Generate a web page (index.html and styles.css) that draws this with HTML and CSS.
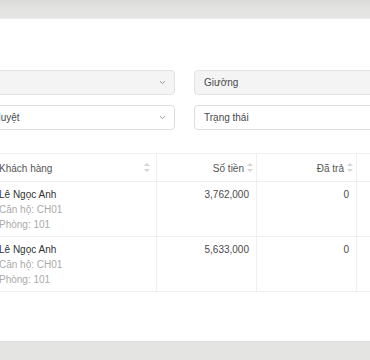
FILE: index.html
```html
<!DOCTYPE html>
<html lang="vi">
<head>
<meta charset="utf-8">
<link rel="stylesheet" href="styles.css">
</head>
<body>
<div class="topbar"></div>
<main class="card">
  <div class="filters">
    <div class="select disabled"><span class="val"></span><svg class="chev" width="7" height="5" viewBox="0 0 7 5"><path d="M1 1.2 L3.5 3.6 L6 1.2" fill="none" stroke="#9a9a9a" stroke-width="1"/></svg></div>
    <div class="select disabled"><span class="val">Giường</span></div>
    <div class="select"><span class="val">Chờ duyệt</span><svg class="chev" width="7" height="5" viewBox="0 0 7 5"><path d="M1 1.2 L3.5 3.6 L6 1.2" fill="none" stroke="#9a9a9a" stroke-width="1"/></svg></div>
    <div class="select"><span class="val">Trạng thái</span></div>
  </div>
  <table class="tbl">
    <thead>
      <tr>
        <th class="c-name"><span>Khách hàng</span><i class="sort"></i></th>
        <th class="c-num"><span>Số tiền</span><i class="sort"></i></th>
        <th class="c-num"><span>Đã trả</span><i class="sort"></i></th>
        <th class="c-num"><span>Còn lại</span><i class="sort"></i></th>
      </tr>
    </thead>
    <tbody>
      <tr>
        <td class="c-name"><div class="nm">Lê Ngọc Anh</div><div class="sub">Căn hộ: CH01</div><div class="sub">Phòng: 101</div></td>
        <td class="c-num">3,762,000</td>
        <td class="c-num">0</td>
        <td class="c-num">3,762,000</td>
      </tr>
      <tr>
        <td class="c-name"><div class="nm">Lê Ngọc Anh</div><div class="sub">Căn hộ: CH01</div><div class="sub">Phòng: 101</div></td>
        <td class="c-num">5,633,000</td>
        <td class="c-num">0</td>
        <td class="c-num">5,633,000</td>
      </tr>
    </tbody>
  </table>
</main>
<div class="bottombar"></div>
</body>
</html>
```
FILE: styles.css
```css
html, body {
  margin: 0;
  padding: 0;
}
body {
  width: 370px;
  height: 360px;
  overflow: hidden;
  background: #e4e4e3;
  font-family: "Liberation Sans", Arial, Helvetica, sans-serif;
  font-size: 10px;
  color: #444;
}
.topbar {
  height: 19px;
  background: linear-gradient(#dadada, #e2e2e1 40%, #e5e5e4);
  border-bottom: 1px solid #ececec;
  box-sizing: border-box;
}
.bottombar {
  height: 19px;
  background: #e4e4e3;
  border-top: 1px solid #dcdcdc;
  box-sizing: border-box;
}
.card {
  height: 322px;
  background: #fff;
  overflow: hidden;
  padding-top: 51px;
  box-sizing: border-box;
}
.filters {
  margin-left: -37px;
  width: 436px;
  display: grid;
  grid-template-columns: 212px 205px;
  column-gap: 19px;
  row-gap: 10px;
}
.select {
  height: 25px;
  box-sizing: border-box;
  border: 1px solid #dedede;
  border-radius: 4px;
  background: #fff;
  display: flex;
  align-items: center;
  justify-content: space-between;
  padding: 0 8px 0 9px;
  color: #4a4a4a;
  font-size: 10px;
}
.select.disabled {
  background: #f4f4f4;
  border-color: #e2e2e2;
}
.chev {
  flex: none;
}
.tbl {
  margin-top: 23px;
  margin-left: -9px;
  border-collapse: separate;
  border-spacing: 0;
  table-layout: fixed;
  width: 466px;
}
.tbl th, .tbl td {
  border-bottom: 1px solid #efeef2;
  border-right: 1px solid #efeef2;
  padding: 0 8px;
  box-sizing: border-box;
}
.tbl th {
  border-top: 1px solid #efeef2;
  height: 29px;
  font-weight: normal;
  color: #555;
  white-space: nowrap;
}
.tbl th span {
  vertical-align: middle;
}
.tbl th.c-name {
  text-align: left;
  width: 166px;
  padding-right: 6px;
}
.tbl th.c-name .sort {
  float: right;
  margin-top: 1px;
}
.tbl th.c-num {
  text-align: right;
  width: 100px;
  padding-right: 3px;
}
.tbl th.c-num .sort {
  margin-left: 3px;
}
.sort {
  display: inline-block;
  vertical-align: middle;
  width: 6px;
  height: 9px;
  position: relative;
}
.sort::before, .sort::after {
  content: "";
  position: absolute;
  left: 0;
  border-left: 3px solid transparent;
  border-right: 3px solid transparent;
}
.sort::before {
  top: 0;
  border-bottom: 3.5px solid #d4d4d4;
}
.sort::after {
  bottom: 0;
  border-top: 3.5px solid #d4d4d4;
}
.tbl td {
  vertical-align: top;
  height: 55px;
  padding-top: 5px;
  padding-bottom: 4px;
  line-height: 15px;
}
.tbl td.c-num {
  text-align: right;
  color: #4a4a4a;
  padding-right: 7px;
}
.nm {
  color: #333;
}
.sub {
  color: #aaa;
}
```
